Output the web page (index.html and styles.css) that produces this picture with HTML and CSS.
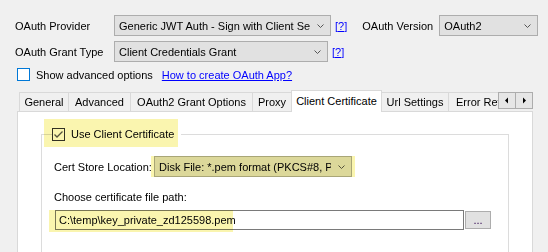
FILE: index.html
```html
<!DOCTYPE html>
<html>
<head>
<meta charset="utf-8">
<link rel="stylesheet" href="styles.css">
</head>
<body>
<div class="form">
  <div class="row r1">
    <span class="lbl">OAuth Provider</span>
    <div class="sel s-provider"><span class="sel-text">Generic JWT Auth - Sign with Client Secret (HS256)</span><svg class="chev" width="7" height="4" viewBox="0 0 7 4"><polyline points="0.5,0.5 3.5,3.5 6.5,0.5"/></svg></div>
    <a class="help">[?]</a>
    <span class="lbl-version">OAuth Version</span>
    <div class="sel s-version"><span class="sel-text">OAuth2</span><svg class="chev" width="7" height="4" viewBox="0 0 7 4"><polyline points="0.5,0.5 3.5,3.5 6.5,0.5"/></svg></div>
  </div>
  <div class="row r2">
    <span class="lbl">OAuth Grant Type</span>
    <div class="sel s-grant"><span class="sel-text">Client Credentials Grant</span><svg class="chev" width="7" height="4" viewBox="0 0 7 4"><polyline points="0.5,0.5 3.5,3.5 6.5,0.5"/></svg></div>
    <a class="help">[?]</a>
  </div>
  <div class="row r3">
    <span class="cb cb-focus"></span>
    <span class="cb-label">Show advanced options</span>
    <a class="link">How to create OAuth App?</a>
  </div>
</div>

<div class="tabctl">
  <div class="tabstrip">
    <div class="tabs">
      <div class="tab t-general">General</div>
      <div class="tab t-advanced">Advanced</div>
      <div class="tab t-oauth2">OAuth2 Grant Options</div>
      <div class="tab t-proxy">Proxy</div>
      <div class="tab t-cc active">Client Certificate</div>
      <div class="tab t-url">Url Settings</div>
      <div class="tab t-err">Error Retry Settings</div>
    </div>
    <div class="scroller">
      <span class="sbtn"><svg width="16" height="15" viewBox="0 0 16 15"><polygon points="9,4.5 9,10.5 6,7.5" fill="#000"/></svg></span>
      <span class="sbtn"><svg width="16" height="15" viewBox="0 0 16 15"><polygon points="7,4.5 7,10.5 10,7.5" fill="#000"/></svg></span>
    </div>
  </div>
  <div class="panel">
    <fieldset class="group">
      <legend class="legend"><span class="legend-in"><span class="cb cb-checked"><svg width="11" height="11" viewBox="0 0 11 11"><polyline points="1.5,5.5 4,8 9.5,2.5"/></svg></span><span class="cb-label">Use Client Certificate</span></span></legend>
      <div class="gb-body">
        <div class="row cert-row">
          <span class="lbl-store">Cert Store Location:</span>
          <div class="sel s-store"><span class="sel-text">Disk File: *.pem format (PKCS#8, PKCS#1)</span><svg class="chev" width="7" height="4" viewBox="0 0 7 4"><polyline points="0.5,0.5 3.5,3.5 6.5,0.5"/></svg></div>
        </div>
        <div class="path-label">Choose certificate file path:</div>
        <div class="row path-row">
          <div class="input">C:\temp\key_private_zd125598.pem</div>
          <div class="btn">...</div>
        </div>
      </div>
    </fieldset>
  </div>
</div>

<div class="hl hl-legend"></div>
<div class="hl hl-select"></div>
<div class="hl hl-input"></div>
</body>
</html>
```
FILE: styles.css
```css
html, body {
  margin: 0;
  padding: 0;
}
body {
  width: 548px;
  height: 252px;
  overflow: hidden;
  background: #f0f0f0;
  font-family: "Liberation Sans", Arial, sans-serif;
  font-size: 11px;
  color: #000;
}
.form {
  padding: 15px 0 0 15px;
}
.row {
  display: flex;
  align-items: center;
}
.r1, .r2 {
  height: 21px;
}
.r2 {
  margin-top: 5px;
}
.r3 {
  margin-top: 6px;
  height: 13px;
}
.lbl {
  width: 99px;
  flex-shrink: 0;
}
.lbl-version {
  width: 77px;
  margin-left: 15px;
  flex-shrink: 0;
}
.sel {
  box-sizing: border-box;
  height: 21px;
  border: 1px solid #adadad;
  background: #e1e1e1;
  display: flex;
  align-items: center;
  padding-left: 4px;
  flex-shrink: 0;
}
.sel-text {
  flex: 1;
  overflow: hidden;
  white-space: nowrap;
}
.chev {
  flex-shrink: 0;
  margin: 0 6px 0 7px;
  fill: none;
  stroke: #555;
  stroke-width: 1;
}
.s-provider { width: 217px; }
.s-version { width: 99px; }
.s-grant { width: 214px; }
.s-store { width: 198px; }
.help {
  margin-left: 4px;
  color: #0000ff;
  text-decoration: underline;
}
.link {
  margin-left: 9px;
  color: #0000ff;
  text-decoration: underline;
}
.cb {
  box-sizing: border-box;
  width: 13px;
  height: 13px;
  border: 1px solid #333;
  background: #fff;
  flex-shrink: 0;
  display: flex;
}
.cb-focus {
  margin-left: 2px;
  border-color: #0078d7;
}
.cb-checked polyline {
  fill: none;
  stroke: #555;
  stroke-width: 1.3;
}
.cb-label {
  margin-left: 6px;
}

/* tabs */
.tabctl {
  margin: 9px 0 0 17px;
  width: 516px;
}
.tabstrip {
  display: flex;
  height: 21px;
}
.tabs {
  flex: 0 0 479px;
  padding-left: 2px;
  display: flex;
  align-items: flex-end;
}
.tab {
  box-sizing: border-box;
  height: 19px;
  border: 1px solid #d9d9d9;
  border-bottom: none;
  margin-left: -1px;
  display: flex;
  align-items: center;
  justify-content: center;
  white-space: nowrap;
  flex-shrink: 0;
  background: #f0f0f0;
}
.t-general { width: 50px; margin-left: 0; }
.t-advanced { width: 63px; }
.t-oauth2 { width: 123px; }
.t-proxy { width: 40px; }
.t-cc { width: 91px; }
.t-url { width: 68px; }
.t-err {
  width: 50px;
  border-right: none;
  justify-content: flex-start;
  padding-left: 7px;
  overflow: hidden;
}
.tab.active {
  height: 22px;
  margin-bottom: -1px;
  background: #fff;
  position: relative;
  z-index: 1;
  padding-bottom: 1px;
}
.scroller {
  display: flex;
  align-self: flex-start;
  margin-top: 2px;
}
.sbtn {
  box-sizing: border-box;
  width: 18px;
  height: 17px;
  border: 1px solid #adadad;
  background: #e6e6e6;
  display: flex;
}
.sbtn + .sbtn {
  margin-left: -1px;
}
.panel {
  box-sizing: border-box;
  height: 170px;
  border: 1px solid #d9d9d9;
  background: #fff;
  padding: 7px 23px 0 23px;
}
.group {
  margin: 0;
  padding: 0 0 0 10px;
  border: 1px solid #dcdcdc;
  min-height: 150px;
}
.legend {
  padding: 0;
  background: #fff;
}
.legend-in {
  display: flex;
  align-items: center;
  height: 30px;
  padding-right: 7px;
}
.gb-body {
  padding-left: 2px;
}
.cert-row {
  margin-top: 7px;
  height: 21px;
}
.lbl-store {
  width: 100px;
  flex-shrink: 0;
}
.path-label {
  margin-top: 14px;
  line-height: 13px;
}
.path-row {
  margin-top: 6px;
}
.input {
  box-sizing: border-box;
  width: 409px;
  height: 20px;
  margin-left: 1px;
  border: 1px solid #7a7a7a;
  background: #fff;
  padding-left: 3px;
  display: flex;
  align-items: center;
  white-space: nowrap;
}
.btn {
  box-sizing: border-box;
  width: 26px;
  height: 18px;
  margin-left: 1px;
  border: 1px solid #adadad;
  background: #e1e1e1;
  display: flex;
  align-items: center;
  justify-content: center;
  color: #300050;
}

/* highlight annotations laid over the screenshot */
.hl {
  position: absolute;
  background: rgb(250, 245, 175);
  mix-blend-mode: multiply;
  pointer-events: none;
}
.hl-legend { left: 44px; top: 119px; width: 134px; height: 28px; }
.hl-select { left: 151px; top: 156px; width: 204px; height: 21px; }
.hl-input { left: 49px; top: 210px; width: 184px; height: 22px; }
```
